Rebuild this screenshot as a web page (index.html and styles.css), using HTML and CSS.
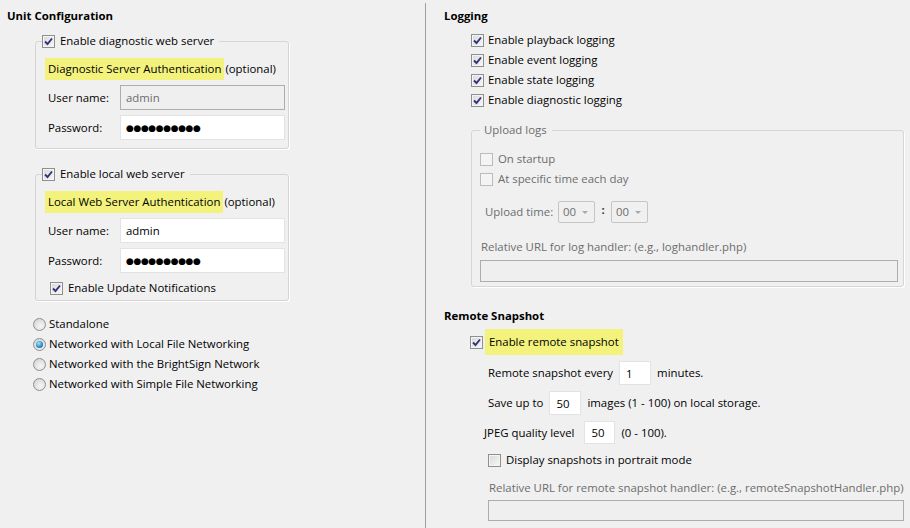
FILE: index.html
```html
<!DOCTYPE html>
<html lang="en">
<head>
    <meta charset="UTF-8">
    <title>Unit Configuration</title>
    <link rel="stylesheet" href="styles.css">
</head>
<body>
    <div class="page">
        <!-- Left column: unit configuration -->
        <div class="col col-left">
            <h3>Unit Configuration</h3>

            <fieldset class="group">
                <legend><span class="cb on"><svg viewBox="0 0 11 11"><path d="M2 5.5 L4.5 8 L9 2.5"/></svg></span>Enable diagnostic web server</legend>
                <div class="auth"><span class="mark">Diagnostic Server Authentication</span><span class="opt">(optional)</span></div>
                <div class="field">
                    <label>User name:</label>
                    <input class="text off" type="text" value="admin" readonly>
                </div>
                <div class="field">
                    <label>Password:</label>
                    <input class="text pw" type="text" value="●●●●●●●●●●" readonly>
                </div>
            </fieldset>

            <fieldset class="group second">
                <legend><span class="cb on"><svg viewBox="0 0 11 11"><path d="M2 5.5 L4.5 8 L9 2.5"/></svg></span>Enable local web server</legend>
                <div class="auth"><span class="mark">Local Web Server Authentication</span><span class="opt">(optional)</span></div>
                <div class="field">
                    <label>User name:</label>
                    <input class="text" type="text" value="admin">
                </div>
                <div class="field">
                    <label>Password:</label>
                    <input class="text pw" type="text" value="●●●●●●●●●●">
                </div>
                <div class="row notify"><span class="cb on"><svg viewBox="0 0 11 11"><path d="M2 5.5 L4.5 8 L9 2.5"/></svg></span>Enable Update Notifications</div>
            </fieldset>

            <div class="radios">
                <div class="row"><span class="rb"></span>Standalone</div>
                <div class="row"><span class="rb on"></span>Networked with Local File Networking</div>
                <div class="row"><span class="rb"></span>Networked with the BrightSign Network</div>
                <div class="row"><span class="rb"></span>Networked with Simple File Networking</div>
            </div>
        </div>

        <!-- Right column: logging and snapshots -->
        <div class="col col-right">
            <h3>Logging</h3>
            <div class="checks">
                <div class="row"><span class="cb on"><svg viewBox="0 0 11 11"><path d="M2 5.5 L4.5 8 L9 2.5"/></svg></span>Enable playback logging</div>
                <div class="row"><span class="cb on"><svg viewBox="0 0 11 11"><path d="M2 5.5 L4.5 8 L9 2.5"/></svg></span>Enable event logging</div>
                <div class="row"><span class="cb on"><svg viewBox="0 0 11 11"><path d="M2 5.5 L4.5 8 L9 2.5"/></svg></span>Enable state logging</div>
                <div class="row"><span class="cb on"><svg viewBox="0 0 11 11"><path d="M2 5.5 L4.5 8 L9 2.5"/></svg></span>Enable diagnostic logging</div>
            </div>

            <fieldset class="group uploads">
                <legend>Upload logs</legend>
                <div class="row first"><span class="cb dis"></span>On startup</div>
                <div class="row"><span class="cb dis"></span>At specific time each day</div>
                <div class="time">
                    <span class="time-label">Upload time:</span>
                    <span class="sel">00<i></i></span>
                    <span class="colon">:</span>
                    <span class="sel">00<i></i></span>
                </div>
                <div class="hint">Relative URL for log handler: (e.g., loghandler.php)</div>
                <input class="text off wide" type="text" readonly>
            </fieldset>

            <h3 class="snap-title">Remote Snapshot</h3>
            <div class="row snap-on"><span class="cb on"><svg viewBox="0 0 11 11"><path d="M2 5.5 L4.5 8 L9 2.5"/></svg></span><span class="mark">Enable remote snapshot</span></div>
            <div class="snap">
                <div class="num-row">Remote snapshot every <input class="text num" type="text" value="1"> minutes.</div>
                <div class="num-row">Save up to <input class="text num" type="text" value="50"> images (1 - 100) on local storage.</div>
                <div class="num-row jpeg">JPEG quality level <input class="text num" type="text" value="50"> (0 - 100).</div>
                <div class="row portrait"><span class="cb"></span>Display snapshots in portrait mode</div>
                <div class="hint handler">Relative URL for remote snapshot handler: (e.g., remoteSnapshotHandler.php)</div>
                <input class="text off handler-url" type="text" readonly>
            </div>
        </div>
    </div>
</body>
</html>
```
FILE: styles.css
```css
body {
    margin: 0;
    background-color: #f0f0f0;
    font-family: 'Open Sans', sans-serif;
    font-size: 11.4px;
    line-height: 16px;
    color: #000;
}

.page {
    display: flex;
    padding-top: 3px;
    height: 525px;
}

.col {
    box-sizing: border-box;
}

.col-left {
    width: 425px;
    padding-left: 7px;
}

.col-right {
    flex: 1;
    border-left: 1px solid #a0a0a0;
    padding-left: 18px;
}

h3 {
    margin: 5px 0 0;
    font-size: 11.4px;
    line-height: 16px;
    font-weight: bold;
}

.row {
    display: flex;
    align-items: center;
    height: 16px;
    white-space: nowrap;
}

/* Checkboxes */
.cb {
    width: 13px;
    height: 13px;
    box-sizing: border-box;
    border: 1px solid #8e8f8f;
    background: linear-gradient(135deg, #d9d9d9, #f7f7f7);
    box-shadow: inset 0 0 0 1px #f4f4f4;
    margin-right: 5px;
    flex: none;
    display: inline-flex;
}

.cb svg {
    width: 11px;
    height: 11px;
}

.cb svg path {
    fill: none;
    stroke: #33337a;
    stroke-width: 1.9;
}

.cb.dis {
    border-color: #bcbcbc;
    background: #f4f4f4;
    box-shadow: none;
}

/* Radio buttons */
.rb {
    width: 13px;
    height: 13px;
    box-sizing: border-box;
    border: 1px solid #8e8f8f;
    border-radius: 50%;
    background: radial-gradient(circle at 60% 65%, #f6f6f6, #cfcfcf);
    margin-right: 3px;
    flex: none;
    display: inline-flex;
    align-items: center;
    justify-content: center;
}

.rb.on::after {
    content: "";
    width: 7px;
    height: 7px;
    border-radius: 50%;
    background: radial-gradient(circle at 40% 35%, #a8e4fb, #2b8fd0 55%, #0f4f8c);
}

/* Group boxes */
.group {
    box-sizing: border-box;
    border: 1px solid #d5d5d5;
    border-radius: 3px;
    box-shadow: 1px 1px 0 #fff;
    margin: 9px 0 0 28px;
    padding: 0 3px 8px 9px;
    width: 254px;
    min-width: 0;
}

.group legend {
    display: flex;
    align-items: center;
    height: 16px;
    padding: 0 5px 0 0;
    margin-left: -3px;
}

.group.second {
    margin-top: 17px;
    padding-bottom: 4px;
}

.auth {
    margin-top: 9px;
    line-height: 16px;
    white-space: nowrap;
}

.mark {
    background-color: #f2f27d;
    padding: 3px;
}

.auth .mark {
    display: inline-block;
}

.opt {
    margin-left: 1px;
}

.field {
    display: flex;
    align-items: center;
    margin-top: 5px;
}

.field label {
    width: 75px;
    padding-left: 3px;
    box-sizing: border-box;
}

.text {
    box-sizing: border-box;
    height: 25px;
    width: 165px;
    border: 1px solid #e3e3e3;
    background: #fff;
    padding: 0 5px;
    font-family: 'Open Sans', sans-serif;
    font-size: 11.4px;
    color: #000;
    outline: none;
    margin: 0;
}

.text.off {
    background: #efefef;
    border-color: #adadad;
    color: #6d6d6d;
}

.text.pw {
    font-family: 'DejaVu Sans', sans-serif;
    font-size: 9px;
    letter-spacing: -0.4px;
}

.notify {
    margin-top: 7px;
    padding-left: 5px;
}

.radios {
    margin: 15px 0 0 26px;
    display: flex;
    flex-direction: column;
    gap: 4px;
}

/* Logging */
.checks {
    margin: 8px 0 0 27px;
    display: flex;
    flex-direction: column;
    gap: 4px;
}

.checks .cb {
    margin-right: 4px;
}

.group.uploads {
    width: 433px;
    margin: 14px 0 0 27px;
    padding: 0 4px 4px 8px;
    color: #6d6d6d;
}

.group.uploads legend {
    padding: 0 5px 0 4px;
    margin-left: 0;
}

.uploads .row.first {
    margin-top: 13px;
}

.uploads .row + .row {
    margin-top: 4px;
}

.time {
    display: flex;
    align-items: center;
    margin-top: 14px;
    padding-left: 5px;
}

.time-label {
    width: 73px;
    flex: none;
}

.sel {
    box-sizing: border-box;
    width: 37px;
    height: 22px;
    border: 1px solid #c5c5c5;
    border-radius: 2px;
    display: inline-flex;
    align-items: center;
    padding-left: 4px;
    color: #6d6d6d;
}

.sel i {
    margin-left: auto;
    margin-right: 6px;
    border-left: 3px solid transparent;
    border-right: 3px solid transparent;
    border-top: 3px solid #a8a8a8;
}

.colon {
    width: 16px;
    text-align: center;
    font-weight: bold;
    color: #333;
    margin-top: -4px;
}

.hint {
    margin-top: 16px;
    padding-left: 1px;
    color: #6d6d6d;
}

.text.wide {
    width: 418px;
    height: 22px;
    margin-top: 5px;
    display: block;
}

/* Remote snapshot */
.snap-title {
    margin-top: 21px;
}

.snap-on {
    margin: 5px 0 0 26px;
    height: 26px;
}

.snap-on .cb {
    margin-right: 2px;
}

.snap-on .mark {
    padding: 5px 4px 5px 4px;
}

.snap {
    margin-left: 44px;
}

.num-row {
    display: flex;
    align-items: center;
    margin-top: 6px;
    white-space: nowrap;
}

.text.num {
    width: 32px;
    height: 24px;
    margin: 0 6px;
    padding: 0 6px;
}

.num-row.jpeg {
    margin-left: -4px;
}

.num-row.jpeg .text.num {
    height: 23px;
    width: 31px;
    margin-left: 10px;
}

.portrait {
    margin-top: 8px;
}

.hint.handler {
    margin-top: 12px;
    padding-left: 1px;
}

.text.handler-url {
    display: block;
    width: 416px;
    height: 21px;
    margin-top: 4px;
}
```
